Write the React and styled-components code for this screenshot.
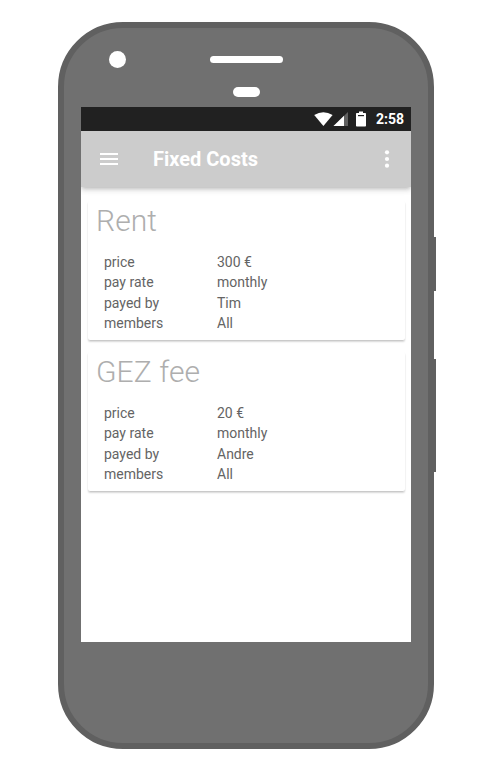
import React from 'react';
import styled, { createGlobalStyle } from 'styled-components';

const GlobalStyle = createGlobalStyle`
  * { box-sizing: border-box; }
  body { margin: 0; background: #fff; font-family: Roboto, "Liberation Sans", sans-serif; }
`;

const Page = styled.main`
  width: 500px;
  height: 779px;
  padding: 22px 0 0 58px;
  overflow: hidden;
`;

const Phone = styled.div`
  position: relative;
  width: 376px;
  height: 727px;
  border: 6px solid #606060;
  border-radius: 65px;
  background: #707070;
  padding: 0 17px;
`;

const SideButton = styled.span`
  position: absolute;
  right: -8px;
  top: ${(p) => p.$top}px;
  width: 2px;
  height: ${(p) => p.$height}px;
  background: #606060;
`;

const Bezel = styled.div`
  display: grid;
  grid-template-columns: 101px 1fr;
  align-items: start;
  height: 79px;
  padding: 23px 0 0 28px;
`;

const Camera = styled.span`
  width: 17px;
  height: 17px;
  border-radius: 50%;
  background: #fff;
`;

const Slots = styled.div`
  display: flex;
  flex-direction: column;
  align-items: center;
  width: 73px;
  gap: 24px;
  padding-top: 5px;
`;

const Slot = styled.span`
  width: ${(p) => p.$width}px;
  height: ${(p) => p.$height}px;
  border-radius: 5px;
  background: #fff;
`;

const Screen = styled.section`
  width: 330px;
  height: 535px;
  background: #fff;
  overflow: hidden;
`;

const StatusBar = styled.div`
  position: relative;
  z-index: 2;
  display: flex;
  justify-content: flex-end;
  height: 24px;
  padding-right: 7px;
  background: #212121;
  color: #fff;
`;

const StatusIcons = styled.svg`
  width: 56px;
  height: 24px;
  margin-right: 9px;
`;

const Clock = styled.span`
  width: 28px;
  font-size: 14px;
  font-weight: 700;
  line-height: 24px;
`;

const Toolbar = styled.header`
  display: flex;
  align-items: center;
  position: relative;
  z-index: 1;
  height: 56px;
  padding: 0 12px 0 16px;
  background: #ccc;
  color: #fff;
  box-shadow: 0 2px 4px -1px rgba(0, 0, 0, 0.2), 0 4px 5px 0 rgba(0, 0, 0, 0.08),
    0 1px 10px 0 rgba(0, 0, 0, 0.06);
`;

const Icon = styled.svg`
  width: 24px;
  height: 24px;
  fill: currentColor;
`;

const Title = styled.h1`
  flex: 1;
  margin: 0 0 0 32px;
  font-size: 20px;
  font-weight: 700;
  line-height: 24px;
`;

const Cards = styled.div`
  display: flex;
  flex-direction: column;
  gap: 12px;
  padding: 14px 6px 0 7px;
`;

const Card = styled.article`
  height: 139px;
  padding: 0 8px;
  border-radius: 2px;
  background: #fff;
  box-shadow: 0 2px 2px 0 rgba(0, 0, 0, 0.14), 0 3px 1px -2px rgba(0, 0, 0, 0.04),
    0 1px 2px 0 rgba(0, 0, 0, 0.06);
`;

const CardTitle = styled.h2`
  margin: 0;
  font-size: 30px;
  font-weight: 350;
  letter-spacing: 0.1px;
  line-height: 39px;
  color: #aeaeae;
`;

const Details = styled.dl`
  display: grid;
  grid-template-columns: 113px 1fr;
  grid-auto-rows: 20.4px;
  margin: 0;
  padding: 12px 8px 0;
  font-size: 14px;
  line-height: 20px;
  color: #646464;
`;

const Label = styled.dt``;
const Value = styled.dd`
  margin: 0;
`;

const costs = [
  { name: 'Rent', rows: [['price', '300 €'], ['pay rate', 'monthly'], ['payed by', 'Tim'], ['members', 'All']] },
  { name: 'GEZ fee', rows: [['price', '20 €'], ['pay rate', 'monthly'], ['payed by', 'Andre'], ['members', 'All']] },
];

export default function App() {
  return (
    <Page>
      <GlobalStyle />
      <Phone>
        <SideButton $top={209} $height={54} />
        <SideButton $top={331} $height={113} />
        <Bezel>
          <Camera />
          <Slots>
            <Slot $width={73} $height={7} />
            <Slot $width={27} $height={10} />
          </Slots>
        </Bezel>
        <Screen>
          <StatusBar>
            <StatusIcons viewBox="0 0 56 24">
              <path d="M3.2 8 Q12.4 2.4 21.6 8 L12.4 19 Z" fill="#fff" />
              <path d="M37 5v14H22.5z" fill="#606060" />
              <path d="M33 8.8V19H22.5z" fill="#fff" />
              <path d="M45.8 6H48V4.4h4V6h2.2q.8 0 .8.8v12q0 .8-.8.8h-8.4q-.8 0-.8-.8v-12q0-.8.8-.8z" fill="#fff" />
              <path d="M47 8h6v1.2h-6z" fill="#212121" />
            </StatusIcons>
            <Clock>2:58</Clock>
          </StatusBar>
          <Toolbar>
            <Icon viewBox="0 0 24 24">
              <path d="M3 18h18v-2H3v2zm0-5h18v-2H3v2zm0-7v2h18V6H3z" />
            </Icon>
            <Title>Fixed Costs</Title>
            <Icon viewBox="0 0 24 24">
              <circle cx="12" cy="5.3" r="2.1" />
              <circle cx="12" cy="12" r="2.1" />
              <circle cx="12" cy="18.7" r="2.1" />
            </Icon>
          </Toolbar>
          <Cards>
            {costs.map((cost) => (
              <Card key={cost.name}>
                <CardTitle>{cost.name}</CardTitle>
                <Details>
                  {cost.rows.map(([label, value]) => (
                    <React.Fragment key={label}>
                      <Label>{label}</Label>
                      <Value>{value}</Value>
                    </React.Fragment>
                  ))}
                </Details>
              </Card>
            ))}
          </Cards>
        </Screen>
      </Phone>
    </Page>
  );
}
